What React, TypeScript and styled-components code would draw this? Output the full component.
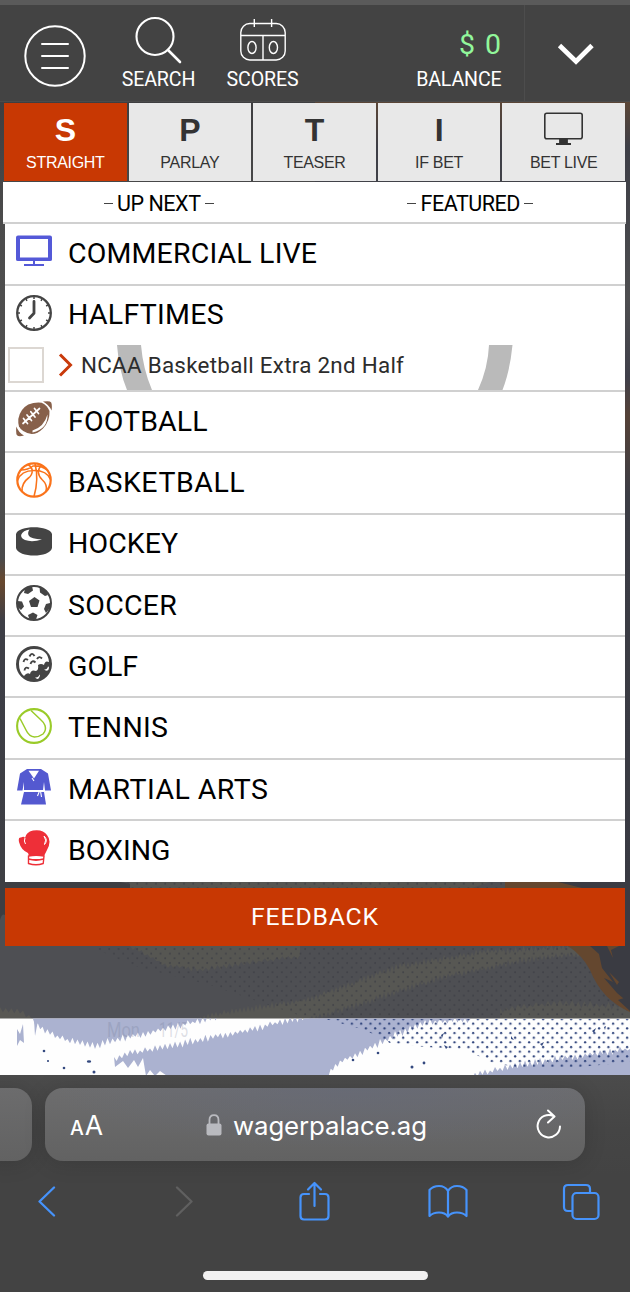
import React from "react";
import styled, { createGlobalStyle } from "styled-components";

const GlobalStyle = createGlobalStyle`
  *, *::before, *::after { box-sizing: border-box; }
  body { margin: 0; background: #434343; }
  svg { display: block; flex: none; }
`;

const uiFont = `Roboto, "Liberation Sans", sans-serif`;

const Screen = styled.div`
  position: relative;
  width: 630px;
  height: 1292px;
  overflow: hidden;
  display: flex;
  flex-direction: column;
  font-family: ${uiFont};
  background: #48494d;
`;

const Backdrop = styled.svg`
  position: absolute;
  inset: 0;
`;

const StatusStrip = styled.div`
  height: 5px;
  flex: none;
  background: #5a5a5a;
  position: relative;
`;

const Header = styled.header`
  position: relative;
  height: 97px;
  flex: none;
  display: flex;
  background: #434343;
  border-bottom: 1px solid #4b4b4b;
  color: #fff;
`;

const MenuSlot = styled.div`
  width: 110px;
  padding: 20px 0 0 24px;
`;

const NavItem = styled.div<{ $w: number; $gap: number }>`
  width: ${(p) => p.$w}px;
  display: flex;
  flex-direction: column;
  align-items: center;
  justify-content: flex-end;
  gap: ${(p) => p.$gap}px;
  padding-bottom: 10px;
`;

const NavLabel = styled.span<{ $track: number }>`
  font-size: 19.6px;
  line-height: 23px;
  letter-spacing: ${(p) => p.$track}px;
  white-space: nowrap;
`;

const Balance = styled.div`
  flex: 1;
  display: flex;
  flex-direction: column;
  align-items: flex-end;
  justify-content: flex-end;
  padding: 0 22.5px 10px 0;
`;

const Amount = styled.span`
  color: #92f79b;
  font-size: 28.5px;
  line-height: 34px;
  margin-bottom: 6px;
  word-spacing: 1.5px;
  letter-spacing: 0.6px;
`;

const ExpandSlot = styled.div`
  width: 106px;
  border-left: 1px solid #4d4d4d;
  padding: 38px 0 0 32px;
`;

const Tabs = styled.nav`
  position: relative;
  flex: none;
  display: grid;
  grid-template-columns: repeat(5, 1fr);
  gap: 2px;
  height: 79px;
  padding: 1px 5px 0 4px;
`;

const Tab = styled.div<{ $active?: boolean }>`
  display: flex;
  flex-direction: column;
  align-items: center;
  background: ${(p) => (p.$active ? "#c83803" : "#e8e8e8")};
  color: ${(p) => (p.$active ? "#fff" : "#333")};
  font-family: "Liberation Sans", Arial, sans-serif;
`;

const TabMark = styled.div`
  height: 50px;
  padding-top: 9px;
  font-size: 32px;
  line-height: 37px;
  font-weight: 700;
`;

const TabLabel = styled.div<{ $track: number }>`
  font-size: 16px;
  line-height: 20px;
  letter-spacing: ${(p) => p.$track}px;
`;

const SubTabs = styled.div`
  position: relative;
  flex: none;
  display: grid;
  grid-template-columns: 1fr 1fr;
  height: 42.4px;
  margin: 1px 4px 0 3px;
  background: #fff;
  border-bottom: 2px solid #d0d0d0;
`;

const SubTab = styled.div`
  display: flex;
  align-items: center;
  justify-content: center;
  gap: 4px;
  font-size: 21.5px;
  letter-spacing: -0.45px;
  color: #000;
  padding-top: 3px;

  &::before,
  &::after {
    content: "";
    width: 9px;
    height: 1.4px;
    background: #444;
  }
`;

const List = styled.ul`
  position: relative;
  flex: none;
  list-style: none;
  margin: 0 5px;
  padding: 0;
  background: #fff;
`;

const Item = styled.li`
  border-bottom: 2px solid #d0d0d0;
  &:last-child {
    border-bottom-color: #fff;
  }
`;

const ItemHead = styled.div`
  height: 59.3px;
  display: flex;
  align-items: center;
  gap: 16px;
  padding: 0.3px 0 0 11px;
`;

const IconBox = styled.span`
  width: 36px;
  height: 36px;
  margin-bottom: 5.4px;
`;

const ItemTitle = styled.span<{ $track: number }>`
  font-size: 28.5px;
  line-height: 34px;
  letter-spacing: ${(p) => p.$track}px;
  color: #000;
`;

const League = styled.div`
  position: relative;
  height: 45px;
  display: flex;
  align-items: center;
  padding: 0 0 5px 3px;
`;

const Ring = styled.svg`
  position: absolute;
  left: 0;
  top: 0;
`;

const Check = styled.span`
  position: relative;
  width: 36px;
  height: 36px;
  border: 2px solid #dcd7d2;
  background: #fff;
  margin: 0 14px 0 0;
`;

const LeagueName = styled.span`
  position: relative;
  margin-left: 8px;
  font-size: 22.4px;
  letter-spacing: 0.27px;
  color: #2c2c2c;
`;

const Feedback = styled.div`
  position: relative;
  flex: none;
  height: 58px;
  margin: 6px 5px 0;
  display: flex;
  align-items: center;
  justify-content: center;
  background: #c83803;
  color: #fff;
  font-size: 24.8px;
  letter-spacing: 0.8px;
  padding-bottom: 1px;
`;

const Spacer = styled.div`
  flex: 1;
`;

const Browser = styled.footer`
  position: relative;
  flex: none;
  height: 217px;
  display: flex;
  flex-direction: column;
  background: linear-gradient(180deg, #4b4b4b 0, #454545 55px, #434343 100px);
  overflow: hidden;
`;

const AddressRow = styled.div`
  display: flex;
  gap: 13px;
  height: 73px;
  margin: 13px 0 0 -20px;
`;

const Pill = styled.div<{ $w: number }>`
  width: ${(p) => p.$w}px;
  height: 73px;
  flex: none;
  border-radius: 18px;
  display: flex;
  align-items: center;
  background: linear-gradient(180deg, #6c6c6d, #626262);
  box-shadow: 0 2px 22px rgba(0, 0, 0, 0.14);
  color: #fff;
  font-family: Inter, "Liberation Sans", sans-serif;
`;

const AddressPill = styled(Pill)`
  background: radial-gradient(ellipse 300px 60px at 310px 0, rgba(101, 105, 121, 0.65), transparent),
    linear-gradient(180deg, #6d6d6e, #626262);
  padding-left: 25px;
`;

const TextSize = styled.span`
  width: 136px;
  display: flex;
  align-items: baseline;
  gap: 1px;
  padding-top: 4px;
  font-size: 26.5px;
  line-height: 32px;
  small {
    font-size: 19.5px;
    font-weight: 500;
  }
`;

const Domain = styled.span`
  width: 303px;
  margin-left: 11px;
  font-size: 25.8px;
  letter-spacing: -0.1px;
  line-height: 32px;
  padding-top: 2px;
`;

const Tools = styled.div`
  display: grid;
  grid-template-columns: 138px 124px 128.5px 134px 38px;
  height: 80px;
  padding: 20px 0 0 37px;
`;

const Tool = styled.span<{ $drop: number }>`
  padding-top: ${(p) => p.$drop}px;
`;

const HomeBar = styled.div`
  width: 225px;
  height: 9px;
  margin: 30px auto 0;
  border-radius: 5px;
  background: #f1f0f0;
`;

const SearchIcon = () => (
  <svg width="47" height="48" viewBox="0 0 47 48" fill="none" stroke="#fff">
    <circle cx="20" cy="20.5" r="18.5" strokeWidth="2.1" />
    <path d="M33 34 45 46" strokeWidth="2.6" strokeLinecap="round" />
  </svg>
);

const ScoresIcon = () => (
  <svg width="46" height="43" viewBox="0 0 46 43" fill="none" stroke="#fff" strokeWidth="1.4">
    <rect x="0.8" y="4.5" width="44.4" height="36.5" rx="9" />
    <path d="M1 16.500H45M23 17V41M14.300 0V8M31.600 0V8" />
    <ellipse cx="12" cy="28.500" rx="4.100" ry="6" />
    <ellipse cx="33.400" cy="28.500" rx="4.100" ry="6" />
  </svg>
);

const BlueTv = () => (
  <svg width="36" height="36" fill="#5459d8">
    <path
      fillRule="evenodd"
      d="M2 2.500H34Q36 2.500 36 4.500V26.500Q36 28 34 28H19V31H28V33H8V31H17V28H2Q0 28 0 26.500V4.500Q0 2.500 2 2.500ZM4 6V24.500H32V6Z"
    />
  </svg>
);

const Clock = () => (
  <svg width="36" height="36" viewBox="-18 -18 36 36" fill="none" stroke="#444">
    <circle r="16.800" strokeWidth="2.300" />
    {Array.from({ length: 12 }, (_, i) => (
      <path key={i} d="M0-16V-14" strokeWidth="1.500" transform={`rotate(${i * 30})`} />
    ))}
    <path d="M0-11.500V.3L-4.500 5" strokeWidth="2.800" strokeLinecap="round" strokeLinejoin="round" />
  </svg>
);

const Football = () => (
  <svg width="36" height="36" viewBox="0 0 36 36">
    <g fill="#87604a">
      <path d="M2.300 18Q4 8 12.300 3.500Q19 .8 25.700 1.700Q31.500 4.500 33.500 10Q34 20 27 27.500Q21.500 33 15.700 33Q6 31.500 3 25.500Q2 22 2.300 18Z" />
      <path d="M27 .6Q34-.6 35.200 1.500Q36.300 4 35.600 9.500Q32.500 3.500 27 .6ZM.3 25.500Q2.500 31.500 8 34.500Q3 36.200 1 34.300Q-.3 32.500 .3 25.500Z" />
    </g>
    <path
      d="M7 22.500 23.500 7.500M7.500 17.500 11.500 22.500M11 14 15.500 19.500M14.800 10.700 19 16M18.500 7.500 22.500 12.500"
      stroke="#fff"
      strokeWidth="1.700"
      strokeLinecap="round"
    />
    <path d="M16.500 29.500Q28 26 31.500 13.500Q32 28 16.500 31.500Z" fill="#fff" />
  </svg>
);

const Basketball = () => (
  <svg width="36" height="36" viewBox="0 0 36 36" fill="none" stroke="#fa731b" strokeWidth="1.600">
    <circle cx="18" cy="18" r="16.700" strokeWidth="2.200" />
    <path d="M1.500 18.500Q5 8.500 18 8.500Q31 8.500 34.500 17.500M19 1.500Q23 17 18 34.500M12 2.500Q16 5 16.300 9Q16 13.500 12.500 16Q5.500 21 6 29.500M26 2.500Q22.300 6 22.300 10Q22.500 14 26 17.500Q32 23 30 29.500M5 8Q12 8 17 4Q25 3 31 8" />
  </svg>
);

const Puck = () => (
  <svg width="36" height="36" viewBox="0 0 36 36">
    <path d="M0 10C2 1 34 1 36 10V24C34 34 2 34 0 24Z" fill="#444" />
    <path d="M13.500 5.500C5 7 2 13 9 16Q16 18.500 26 15.500Q15 14.500 13 12Q11 9 13.500 5.500Z" fill="#fff" />
  </svg>
);

const Soccer = () => (
  <svg width="36" height="36" viewBox="0 0 36 36">
    <circle cx="18" cy="18" r="17" fill="#fff" stroke="#444" strokeWidth="2" />
    <g fill="#444">
      <path d="M18.500 12 23.500 15.500 21.500 22H15L13 16ZM9 3.500 16 1 17 5.500 12 9 8 8ZM23.500 1.500 30 6 32 10 29 11 24 7.500ZM1.500 16 6 16.500 8 21.500 5 25 1.500 22ZM34 18 30 19 28 24 30 28 34 23ZM12 30 17 27.500 21.500 30 20 34.500H13.500Z" />
    </g>
  </svg>
);

const Golf = () => (
  <svg width="36" height="36" viewBox="0 0 36 36">
    <circle cx="18" cy="18" r="18" fill="#444" />
    <path
      d="M18 3C9 3 3 10 3 18Q3 26 8 30Q11 26 14 28Q15 23 20 25Q23 24 22 19Q25 17 28 19Q29 14 33 16Q32 3 18 3Z"
      fill="#fff"
    />
    <path
      d="M13.500 10.500Q16 5.500 18.500 10M21 13Q23 9.500 26 12.500M7.500 16Q8.500 11.500 12 14M14.500 18Q16 13.500 19.500 16.500M8.500 24.500Q9 20 13 22.500"
      stroke="#444"
      strokeWidth="1.900"
      fill="none"
    />
    <path d="M19 31.500Q22 34.500 23.500 31Q24.500 29 23.500 28.500Q22.500 32 19 31.500ZM28 23.500Q32.500 26.500 33 22Q33 20 32 20.500Q31 24 28 23.500Z" fill="#fff" />
  </svg>
);

const Tennis = () => (
  <svg width="36" height="36" viewBox="0 0 36 36" fill="none" stroke="#9acb29">
    <circle cx="18" cy="18" r="16.900" strokeWidth="2.100" />
    <path
      d="M4 10.500 10 22Q13 28.500 18.500 29Q23 29 27 26Q30.500 22.500 29 17.500Q28 14.500 25 12L15 2.500"
      strokeWidth="1.500"
    />
  </svg>
);

const Gi = () => (
  <svg width="36" height="36" viewBox="0 0 36 36" fill="#5459d0">
    <path d="M11 0H25L32 4.500 35 21.500H29L28 13 27 21H8L8 13 6.500 21.500H1L4 4.500Z" />
    <path d="M8 23H28L30 35.500H5Z" />
    <path d="M12.500 1.800H23L18 9.500Z" fill="#fff" />
    <path d="M16 9 18 12M23.500 22 21.500 27M24.500 22 25.500 28" stroke="#fff" strokeWidth="1.100" />
  </svg>
);

const Glove = () => (
  <svg width="36" height="36" viewBox="0 0 36 36">
    <path
      d="M9 8Q10 2 17 .5Q27-1 31 5Q36 11 31 20L28 26H13L12 23Q5 20 3 12Q2 7 5 7.500Q8 6 9 8Z"
      fill="#ee2f38"
    />
    <path d="M12.500 26Q20 24.500 28 26L27.200 33.500Q20 36 12.500 33.500Z" fill="#fff" stroke="#ee2f38" strokeWidth="1.400" />
    <path d="M12.500 29Q20 31 27.500 29" stroke="#ee2f38" strokeWidth="1.800" fill="none" />
    <path d="M9 8Q7.500 11 9.500 14M28 6Q31 10 28.500 14.500Q32.500 10 28 6" fill="none" stroke="#fff" />
  </svg>
);

const sports = [
  { name: "COMMERCIAL LIVE", track: 0.17, Icon: BlueTv },
  { name: "HALFTIMES", track: 0.3, Icon: Clock, league: "NCAA Basketball Extra 2nd Half" },
  { name: "FOOTBALL", track: 0.15, Icon: Football },
  { name: "BASKETBALL", track: 0.55, Icon: Basketball },
  { name: "HOCKEY", track: 0.1, Icon: Puck },
  { name: "SOCCER", track: 0.3, Icon: Soccer },
  { name: "GOLF", track: 0, Icon: Golf },
  { name: "TENNIS", track: 0.3, Icon: Tennis },
  { name: "MARTIAL ARTS", track: 0.45, Icon: Gi },
  { name: "BOXING", track: 0, Icon: Glove },
];

const wagers = [
  { mark: "S", label: "STRAIGHT", track: -0.3 },
  { mark: "P", label: "PARLAY", track: -0.25 },
  { mark: "T", label: "TEASER", track: -0.35 },
  { mark: "I", label: "IF BET", track: -0.3 },
  { mark: "tv", label: "BET LIVE", track: -0.3 },
];

type Pt = [number, number];

/* Turns a polyline into a torn brush edge with a repeatable noise. */
function torn(pts: Pt[], amp: number, step = 3) {
  const out: string[] = [];
  let n = 0;
  for (let i = 0; i < pts.length - 1; i++) {
    const [x1, y1] = pts[i];
    const [x2, y2] = pts[i + 1];
    const count = Math.max(1, Math.round(Math.abs(x2 - x1) / step));
    for (let k = 0; k < count; k++) {
      const t = k / count;
      const noise = Math.abs(Math.sin(n * 12.9898) * 43758.5453) % 1;
      const d = (n % 2 ? 1 : -1) * amp * (0.25 + 0.75 * noise);
      out.push(`${(x1 + (x2 - x1) * t).toFixed(1)} ${(y1 + (y2 - y1) * t + d).toFixed(1)}`);
      n++;
    }
  }
  const last = pts[pts.length - 1];
  out.push(`${last[0]} ${last[1]}`);
  return out.join(" L");
}

const Artwork = () => (
  <Backdrop width="630" height="1292" viewBox="0 0 630 1292">
    <defs>
      <pattern id="navyDots" width="9.330" height="9.330" patternUnits="userSpaceOnUse">
        <circle cx="2" cy="2" r="1.150" fill="#2f437b" />
        <circle cx="6.660" cy="6.660" r="1.150" fill="#2f437b" />
      </pattern>
      <pattern id="greyDots" width="9.330" height="9.330" patternUnits="userSpaceOnUse">
        <circle cx="2" cy="2" r="1" fill="#3d3e45" />
        <circle cx="6.660" cy="6.660" r="1" fill="#3d3e45" />
      </pattern>
      <clipPath id="bright">
        <rect y="1018.500" width="630" height="57" />
      </clipPath>
      <linearGradient id="leftEdge" x1="0" y1="0" x2="0" y2="1">
        <stop offset="0" stopColor="#3e3e40" />
        <stop offset="0.150" stopColor="#4b4b4b" />
        <stop offset="0.400" stopColor="#535353" />
        <stop offset="0.580" stopColor="#4a4a4b" />
        <stop offset="0.610" stopColor="#68482e" />
        <stop offset="0.660" stopColor="#3d3e46" />
        <stop offset="1" stopColor="#3e3f44" />
      </linearGradient>
      <linearGradient id="rightEdge" x1="0" y1="0" x2="0" y2="1">
        <stop offset="0" stopColor="#5c4636" />
        <stop offset="0.060" stopColor="#3d3e46" />
        <stop offset="0.250" stopColor="#4e4e50" />
        <stop offset="0.350" stopColor="#40404a" />
        <stop offset="0.400" stopColor="#554238" />
        <stop offset="0.500" stopColor="#3c3d45" />
        <stop offset="1" stopColor="#393a42" />
      </linearGradient>
    </defs>
    <rect y="100" width="315" height="790" fill="url(#leftEdge)" />
    <rect x="315" y="100" width="315" height="790" fill="url(#rightEdge)" />
    <rect y="881" width="630" height="138" fill="#4e4f53" />
    <path d="M0 880H110L150 888H0ZM0 888H5V915Q2 913 0 920Z" fill="#3d3e42" />
    <path
      d={`M130 882H490L300 946 L${torn([[300, 956], [250, 963], [200, 970], [165, 965], [130, 946]], 3)}Z`}
      fill="#565652"
    />
    <path
      d={`M${torn([[200, 1017], [310, 999], [400, 966], [480, 952], [595, 945]], 4, 2)} L${torn([[580, 954], [520, 961], [440, 978], [370, 1001], [310, 1019]], 4, 2)} L200 1019Z`}
      fill="#575753"
    />
    <path d={`M${torn([[0, 1008], [20, 1012], [35, 1019]], 4)} L0 1019Z`} fill="#595854" />
    <path d={`M${torn([[500, 1009], [560, 1003], [630, 1007]], 4)} L630 1019 L500 1019Z`} fill="#565653" />
    <path d="M90 946H630V1019H310L210 985 130 965ZM115 881H520V888H115Z" fill="url(#greyDots)" opacity="0.750" />
    <path d="M505 880H630V1012Q602 1000 590 970Q582 955 568 946L505 888Z" fill="#64472f" />
    <path
      d="M590 946 599 954 602 968 613 982 604 978 617 993 630 1004V880H550L590 890ZM618 1000 630 1011V996Z"
      fill="#3a3b42"
    />
    <path d="M607 946 613 958 611 950 619 946ZM609 972 619 982 617 985Z" fill="#64472f" />
    <g clipPath="url(#bright)">
      <rect y="1018" width="630" height="58" fill="#fefefe" />
      <g fill="#abb2d0">
        <path
          d={`M${torn([[33, 1020], [45, 1031], [65, 1040], [95, 1046], [110, 1041], [143, 1034], [173, 1027], [200, 1021], [218, 1016]], 4, 2.5)} L218 1010 L33 1010Z`}
        />
        <path
          d={`M${torn([[114, 1058], [130, 1053], [150, 1050], [175, 1045], [213, 1037], [250, 1030], [285, 1021], [305, 1017]], 4, 2.5)} L305 1010 L480 1010 L${torn([[470, 1019], [425, 1023], [395, 1035], [370, 1048], [340, 1062], [326, 1076]], 4, 2.5)} L170 1078 L160 1071 L155 1076 L150 1070 L146 1076 L143 1058 L138 1067 L134 1060 L128 1068 L123 1061 L115 1067Z`}
        />
        <path d={`M${torn([[465, 1077], [520, 1065], [570, 1057], [630, 1049]], 4, 2.5)} L630 1077Z`} />
        <path d="M17 1029 20 1034 23 1024 24 1043 20 1040 17 1046ZM34 1020 35 1036 38 1021Z" />
      </g>
      <path d="M325 1019H630V1062L580 1067H515L490 1062 465 1049 425 1047 390 1043 365 1030Z" fill="url(#navyDots)" />
      <g fill="#34497f">
        <circle cx="44" cy="1051" r="1.300" />
        <circle cx="48" cy="1061" r="1.100" />
        <circle cx="64" cy="1068" r="1.300" />
        <ellipse cx="89" cy="1061.500" rx="2.200" ry="1.200" />
        <circle cx="94" cy="1072" r="1.500" />
        <circle cx="353" cy="1060" r="1.300" />
        <circle cx="378" cy="1053" r="1.300" />
        <circle cx="412" cy="1067" r="1.500" />
        <circle cx="424" cy="1063" r="1.400" />
        <path d="M441 1035 444 1033 442 1038ZM444 1045 448 1047 446 1049ZM592 1031 596 1028 594 1033ZM604 1027 606 1026 605 1030ZM540 1044 544 1042 542 1046ZM511 1036 514 1040 511 1039Z" />
      </g>
      <g fontFamily="Roboto, sans-serif" fontSize="20" fill="#68708c" opacity="0.220">
        <text x="107" y="1036.500" textLength="33" lengthAdjust="spacingAndGlyphs">Mon</text>
        <text x="159" y="1036.500" textLength="29" lengthAdjust="spacingAndGlyphs">11/5</text>
      </g>
    </g>
  </Backdrop>
);

export default function App() {
  return (
    <Screen>
      <GlobalStyle />
      <Artwork />
      <StatusStrip />
      <Header>
        <MenuSlot>
          <svg width="62" height="62" viewBox="0 0 62 62" fill="none" stroke="#fff" strokeWidth="2">
            <circle cx="31" cy="31" r="29.700" />
            <path d="M18 19H44M18 31H44M18 43H44" strokeLinecap="round" />
          </svg>
        </MenuSlot>
        <NavItem $w={97} $gap={4}>
          <SearchIcon />
          <NavLabel $track={-0.15}>SEARCH</NavLabel>
        </NavItem>
        <NavItem $w={111} $gap={6}>
          <ScoresIcon />
          <NavLabel $track={-0.15}>SCORES</NavLabel>
        </NavItem>
        <Balance>
          <Amount>$ 0</Amount>
          <NavLabel $track={-0.15}>BALANCE</NavLabel>
        </Balance>
        <ExpandSlot>
          <svg width="38" height="24" viewBox="0 0 38 24" fill="none">
            <path d="M2.500 2.500 19 18.500 35 2.500" stroke="#fff" strokeWidth="4.800" />
          </svg>
        </ExpandSlot>
      </Header>
      <Tabs>
        {wagers.map((w, i) => (
          <Tab key={w.label} $active={i === 0}>
            <TabMark>
              {w.mark === "tv" ? (
                <svg width="39" height="34" viewBox="0 0 39 34" fill="none" stroke="#333">
                  <rect x="0.800" y="1.300" width="37.400" height="25.500" rx="2" strokeWidth="1.600" />
                  <path d="M16 28H23V31.500H16ZM12 32H27" strokeWidth="1.800" fill="#333" />
                </svg>
              ) : (
                w.mark
              )}
            </TabMark>
            <TabLabel $track={w.track}>{w.label}</TabLabel>
          </Tab>
        ))}
      </Tabs>
      <SubTabs>
        <SubTab>UP NEXT</SubTab>
        <SubTab>FEATURED</SubTab>
      </SubTabs>
      <List>
        {sports.map(({ name, track, Icon, league }) => (
          <Item key={name}>
            <ItemHead>
              <IconBox>
                <Icon />
              </IconBox>
              <ItemTitle $track={track}>{name}</ItemTitle>
            </ItemHead>
            {league && (
              <League>
                <Ring width="620" height="45" fill="#bababa">
                  <path d="M112 0H136Q138 24 147 45H122Q114 26 112 0ZM484 0H507.500Q505 26 497.500 45H473Q483 23 484 0Z" />
                </Ring>
                <Check />
                <svg width="15" height="26" viewBox="0 0 15 26" fill="none">
                  <path d="M2 2.500 12.500 13 2 23.500" stroke="#c93a0b" strokeWidth="3" />
                </svg>
                <LeagueName>{league}</LeagueName>
              </League>
            )}
          </Item>
        ))}
      </List>
      <Feedback>FEEDBACK</Feedback>
      <Spacer />
      <Browser>
        <AddressRow>
          <Pill $w={52} />
          <AddressPill $w={540}>
            <TextSize>
              <small>A</small>A
            </TextSize>
            <svg width="16" height="22" viewBox="0 0 16 22">
              <path d="M3.500 10V6Q3.500 1.200 8 1.200T12.500 6V10" fill="none" stroke="#b9babf" strokeWidth="1.800" />
              <rect x="0.500" y="9.500" width="15" height="12" rx="2" fill="#b9babf" />
            </svg>
            <Domain>wagerpalace.ag</Domain>
            <svg width="26" height="31" viewBox="0 0 26 31" fill="none" stroke="#fff" strokeWidth="2" strokeLinecap="round" strokeLinejoin="round">
              <path d="M24 17.500A11.200 11.200 0 1 1 17.500 7M12 1.500 18.500 7.500 12 13.500" />
            </svg>
          </AddressPill>
        </AddressRow>
        <Tools>
          <Tool $drop={4}>
            <svg width="19" height="32" viewBox="0 0 19 32" fill="none" stroke="#4693fb" strokeWidth="2.300" strokeLinecap="round" strokeLinejoin="round">
              <path d="M17 2.500 2.500 16.500 17 30.500" />
            </svg>
          </Tool>
          <Tool $drop={4}>
            <svg width="19" height="32" viewBox="0 0 19 32" fill="none" stroke="#606060" strokeWidth="2.300" strokeLinecap="round" strokeLinejoin="round">
              <path d="M2 2.500 16.500 16.500 2 30.500" />
            </svg>
          </Tool>
          <Tool $drop={0}>
            <svg width="31" height="40" viewBox="0 0 31 40" fill="none" stroke="#4693fb" strokeWidth="2.200" strokeLinecap="round" strokeLinejoin="round">
              <path d="M10 13H5Q1.500 13 1.500 16.500V35Q1.500 38.500 5 38.500H26Q29.500 38.500 29.500 35V16.500Q29.500 13 26 13H21M15.500 25V2M9 8.500 15.500 2 22 8.500" />
            </svg>
          </Tool>
          <Tool $drop={3}>
            <svg width="40" height="36" viewBox="0 0 40 36" fill="none" stroke="#4693fb" strokeWidth="2.200" strokeLinejoin="round">
              <path d="M20 7Q17 2 11 2Q5 2 1.500 6V32Q5 28.500 11 28.500Q17 28.500 20 32.500Q23 28.500 29 28.500Q35 28.500 38.500 32V6Q35 2 29 2Q23 2 20 7ZM20 7V32" />
            </svg>
          </Tool>
          <Tool $drop={1.5}>
            <svg width="38" height="38" viewBox="0 0 38 38" fill="none" stroke="#4693fb" strokeWidth="2.200">
              <path d="M10 28H6Q2 28 2 24V6Q2 2 6 2H24Q28 2 28 6V10" />
              <rect x="10.500" y="10" width="26" height="26" rx="4" />
            </svg>
          </Tool>
        </Tools>
        <HomeBar />
      </Browser>
    </Screen>
  );
}
